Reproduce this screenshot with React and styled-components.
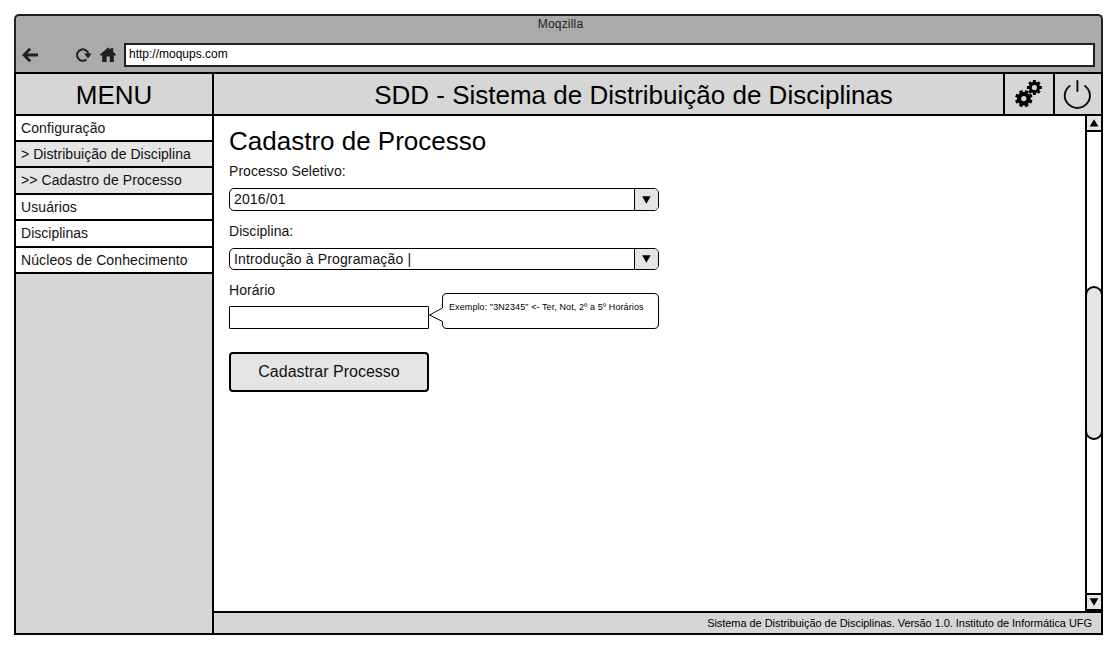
import React from "react";
import styled, { createGlobalStyle } from "styled-components";

const GlobalStyle = createGlobalStyle`
  *, *::before, *::after { box-sizing: border-box; }
  body {
    margin: 0;
    background: #fff;
    color: #000;
    font-family: "Liberation Sans", Arial, sans-serif;
    white-space: nowrap;
  }
`;

const Page = styled.div`
  width: 1117px;
  height: 647px;
  padding: 14px 14px 12px;
  overflow: hidden;
`;

const Browser = styled.div`
  width: 1089px;
  height: 621px;
  display: flex;
  flex-direction: column;
`;

const Chrome = styled.div`
  height: 58px;
  background: #aaa;
  border: 2px solid #231f20;
  border-bottom: 0;
  border-radius: 5px 5px 0 0;
`;

const WindowTitle = styled.div`
  height: 27px;
  padding-left: 4px;
  line-height: 16px;
  font-size: 12px;
  letter-spacing: 0.2px;
  text-align: center;
  color: #231f20;
`;

const Toolbar = styled.div`
  display: flex;
  align-items: center;
  height: 24px;
  padding: 0 6px;
`;

const ChromeIcon = styled.svg`
  flex: none;
  width: 16px;
  height: 16px;
  margin-right: ${(p) => p.$gap}px;
  color: #231f20;
`;

const AddressBar = styled.div`
  flex: 1;
  height: 24px;
  padding-left: 3px;
  background: #fff;
  border: 2px solid #231f20;
  font-size: 12px;
  line-height: 18px;
`;

const Header = styled.div`
  display: flex;
  height: 44px;
  background: #d6d6d6;
  border: 2px solid #000;
`;

const HeaderCell = styled.div`
  width: ${(p) => p.$width}px;
  height: 40px;
  display: flex;
  align-items: center;
  justify-content: center;
  border-left: ${(p) => (p.$first ? 0 : 2)}px solid #000;
`;

const HeaderTitle = styled(HeaderCell)`
  padding: 2px 0 0 ${(p) => p.$indent || 0}px;
  font-size: 26px;
  line-height: 38px;
`;

const Main = styled.div`
  display: flex;
  height: 519px;
  border: 2px solid #000;
  border-top: 0;
`;

const Sidebar = styled.div`
  width: 198px;
  background: #d6d6d6;
  border-right: 2px solid #000;
`;

const MenuItem = styled.div`
  height: ${(p) => p.$height}px;
  padding-left: 5px;
  background: ${(p) => (p.$active ? "#e5e5e5" : "#fff")};
  border-bottom: 2px solid #000;
  font-size: 14px;
  line-height: 24px;
  letter-spacing: ${(p) => p.$spacing}px;
  color: #111;
`;

const Workspace = styled.div`
  width: 887px;
  display: flex;
  flex-direction: column;
`;

const ContentRow = styled.div`
  display: flex;
  height: 495px;
`;

const Content = styled.div`
  width: 871px;
  padding: 9px 0 0 15px;
`;

const Heading = styled.h1`
  height: 32px;
  margin: 0 0 6px;
  font-size: 26px;
  font-weight: normal;
  line-height: 32px;
`;

const Label = styled.div`
  height: 16px;
  margin-bottom: ${(p) => p.$gap}px;
  font-size: 14px;
  line-height: 16px;
  letter-spacing: 0.04px;
  color: #111;
`;

const Select = styled.div`
  display: flex;
  width: 430px;
  height: ${(p) => p.$height}px;
  margin-bottom: 12px;
  border: 1px solid #000;
  border-radius: 5px;
  overflow: hidden;
`;

const SelectValue = styled.div`
  flex: 1;
  padding-left: 4px;
  font-size: 14px;
  line-height: 21px;
  letter-spacing: 0.15px;
  color: #111;
`;

const SelectArrow = styled.div`
  width: 24px;
  display: flex;
  align-items: center;
  justify-content: center;
  background: #e5e5e5;
  border-left: 1px solid #000;
`;

const FieldRow = styled.div`
  position: relative;
  width: 430px;
  height: 23px;
  margin-bottom: 23px;
`;

const TextField = styled.div`
  width: 200px;
  height: 23px;
  border: 1px solid #000;
  border-radius: 1px;
`;

const Callout = styled.div`
  position: absolute;
  left: 200px;
  bottom: 0;
  width: 230px;
  height: 36px;
  padding-left: 20px;
  font-size: 9px;
  line-height: 28px;
  letter-spacing: 0.095px;
`;

const CalloutShape = styled.svg`
  position: absolute;
  inset: 0;
  z-index: -1;
`;

const SubmitButton = styled.button`
  display: block;
  width: 200px;
  height: 40px;
  padding: 0;
  background: #e5e5e5;
  border: 2px solid #000;
  border-radius: 4px;
  color: #111;
  font: 16px/36px "Liberation Sans", Arial, sans-serif;
`;

const Scrollbar = styled.div`
  width: 18px;
  height: 495px;
  margin-right: -2px;
  display: flex;
  flex-direction: column;
  border: solid #000;
  border-width: 0 2px;
`;

const ScrollButton = styled.div`
  height: ${(p) => (p.$down ? 18 : 16)}px;
  display: flex;
  align-items: center;
  justify-content: center;
  background: #e5e5e5;
  border: solid #000;
  border-width: ${(p) => (p.$down ? "2px 0" : "0 0 2px")};
`;

const ScrollTrack = styled.div`
  flex: 1;
  padding-top: 154px;
`;

const Thumb = styled.div`
  width: 18px;
  height: 154px;
  margin-left: -2px;
  background: #e5e5e5;
  border: 2px solid #000;
  border-radius: 9px;
`;

const Footer = styled.div`
  height: 22px;
  padding-right: 9px;
  background: #d6d6d6;
  border-top: 2px solid #000;
  font-size: 11px;
  line-height: 20px;
  letter-spacing: -0.05px;
  text-align: right;
`;

const menu = [
  { text: "Configuração", height: 26, spacing: 0.1 },
  { text: "> Distribuição de Disciplina", height: 26, spacing: 0.05, active: true },
  { text: ">> Cadastro de Processo", height: 27, spacing: 0.09, active: true },
  { text: "Usuários", height: 26, spacing: 0.08 },
  { text: "Disciplinas", height: 27, spacing: 0.02 },
  { text: "Núcleos de Conhecimento", height: 26, spacing: 0.11 },
];

const Triangle = ({ up, shift = 0 }) => (
  <svg width="10" height="8" viewBox={`${shift} 0 10 8`}>
    <path d={up ? "M5 0.3L9.3 7.5H0.7Z" : "M0.7 0.3H9.3L5 7.8Z"} />
  </svg>
);

const gearPath = (cx, cy, outer, inner, turn) => {
  const points = [];
  for (let i = 0; i < 8; i++) {
    [[-0.28, inner], [-0.19, outer], [0.19, outer], [0.28, inner]].forEach(([offset, r]) => {
      const angle = (i * Math.PI) / 4 + turn + offset;
      points.push(`${(cx + r * Math.sin(angle)).toFixed(2)} ${(cy - r * Math.cos(angle)).toFixed(2)}`);
    });
  }
  return `M${points.join("L")}Z`;
};

const Gears = () => (
  <svg width="28" height="28" viewBox="0 0 28 28">
    <path d={gearPath(8.8, 18.6, 8.9, 6.7, Math.PI / 8)} />
    <circle cx="8.8" cy="18.6" r="2.6" fill="#d6d6d6" />
    <path d={gearPath(19.4, 7.5, 7.6, 5.6, 0)} />
    <circle cx="19.4" cy="7.5" r="2.6" fill="#d6d6d6" />
  </svg>
);

const Power = () => (
  <svg width="30" height="32" viewBox="0 0 30 32" fill="none" stroke="#111" strokeWidth="2" strokeLinecap="round">
    <path d="M6.7 8A12.6 12.2 0 1 0 22 8M14.4 3V13" />
  </svg>
);

export default function App() {
  return (
    <Page>
      <GlobalStyle />
      <Browser>
        <Chrome>
          <WindowTitle>Moqzilla</WindowTitle>
          <Toolbar>
            <ChromeIcon viewBox="0 0 16 16" $gap={38}>
              <path d="M8.2 1.7L2 8l6.2 6.3M2.5 8H16" fill="none" stroke="currentColor" strokeWidth="2.8" />
            </ChromeIcon>
            <ChromeIcon viewBox="0 0 16 16" $gap={8}>
              <path d="M10.4 12.5A5.7 5.7 0 1 1 12.4 7" fill="none" stroke="currentColor" strokeWidth="2" />
              <path d="M8.2 6.4H15.7L12 11.4Z" fill="currentColor" />
            </ChromeIcon>
            <ChromeIcon viewBox="0 0 16 16" $gap={8}>
              <path d="M8 0.4L10.8 2.6V1H13.2V4.8L16 7.6V8.4H13.8V15H9.8V9.6H6.6V15H2.2V8.4H0V7.6Z" fill="currentColor" />
            </ChromeIcon>
            <AddressBar>http://moqups.com</AddressBar>
          </Toolbar>
        </Chrome>
        <Header>
          <HeaderTitle $width={196} $first>MENU</HeaderTitle>
          <HeaderTitle $width={791} $indent={50}>SDD - Sistema de Distribuição de Disciplinas</HeaderTitle>
          <HeaderCell $width={50}><Gears /></HeaderCell>
          <HeaderCell $width={48}><Power /></HeaderCell>
        </Header>
        <Main>
          <Sidebar>
            {menu.map((item) => (
              <MenuItem key={item.text} $height={item.height} $spacing={item.spacing} $active={item.active}>
                {item.text}
              </MenuItem>
            ))}
          </Sidebar>
          <Workspace>
            <ContentRow>
              <Content>
                <Heading>Cadastro de Processo</Heading>
                <Label $gap={9}>Processo Seletivo:</Label>
                <Select $height={23}>
                  <SelectValue>2016/01</SelectValue>
                  <SelectArrow><Triangle shift={0.6} /></SelectArrow>
                </Select>
                <Label $gap={9}>Disciplina:</Label>
                <Select $height={22}>
                  <SelectValue>Introdução à Programação |</SelectValue>
                  <SelectArrow><Triangle shift={0.6} /></SelectArrow>
                </Select>
                <Label $gap={8}>Horário</Label>
                <FieldRow>
                  <TextField />
                  <Callout>
                    <CalloutShape width="230" height="36">
                      <path
                        d="M18 0.5H225Q229.5 0.5 229.5 5V31Q229.5 35.5 225 35.5H18Q13.5 35.5 13.5 31V28.5L0.5 22L13.5 15V5Q13.5 0.5 18 0.5Z"
                        fill="#fff"
                        stroke="#000"
                      />
                    </CalloutShape>
                    Exemplo: "3N2345" &lt;- Ter, Not, 2º a 5º Horários
                  </Callout>
                </FieldRow>
                <SubmitButton type="button">Cadastrar Processo</SubmitButton>
              </Content>
              <Scrollbar>
                <ScrollButton><Triangle up /></ScrollButton>
                <ScrollTrack><Thumb /></ScrollTrack>
                <ScrollButton $down><Triangle /></ScrollButton>
              </Scrollbar>
            </ContentRow>
            <Footer>Sistema de Distribuição de Disciplinas. Versão 1.0. Instituto de Informática UFG</Footer>
          </Workspace>
        </Main>
      </Browser>
    </Page>
  );
}
